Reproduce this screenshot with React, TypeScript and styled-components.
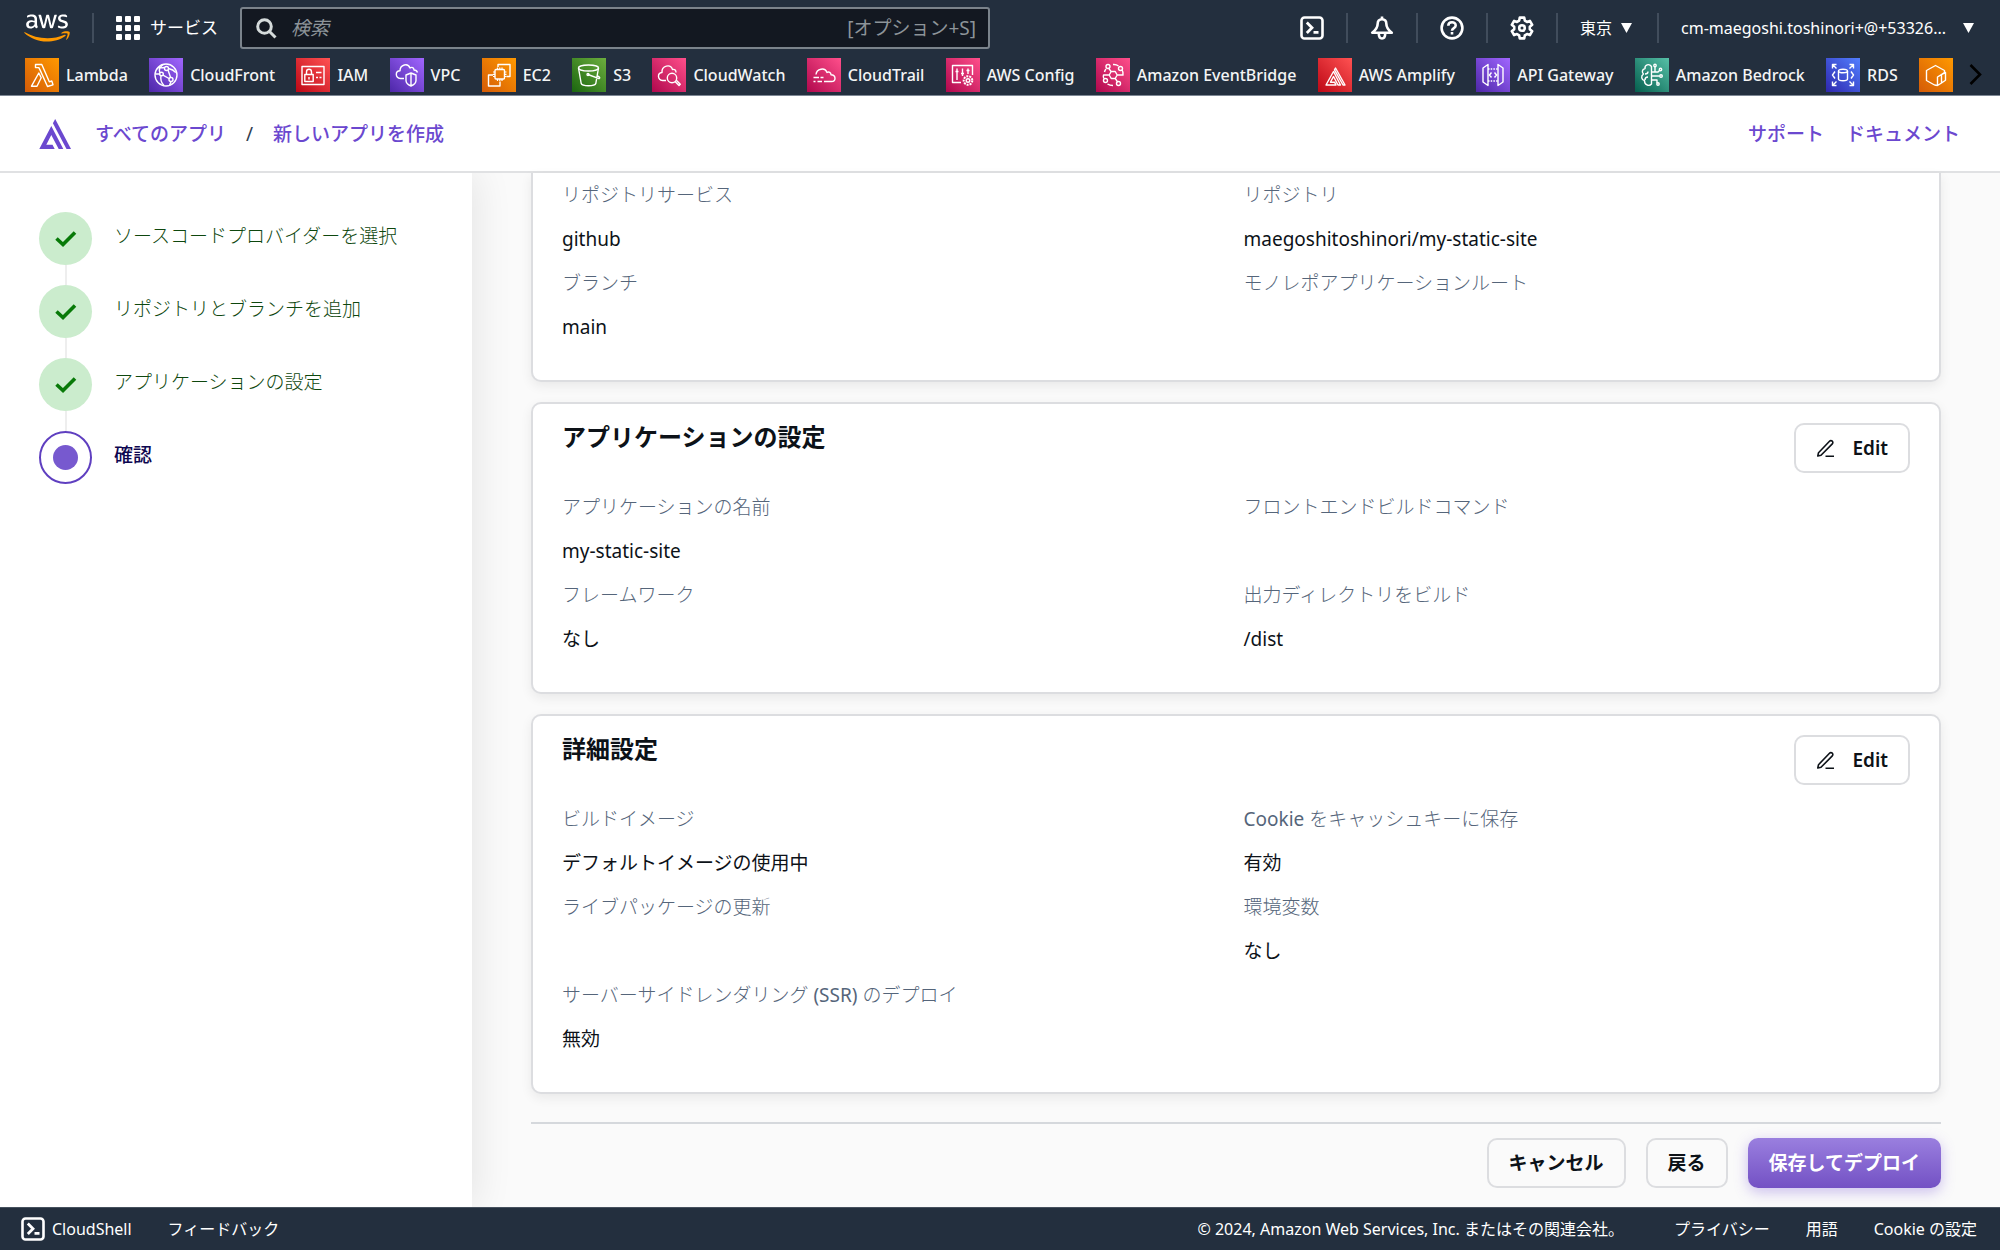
import React from "react";
import styled, { createGlobalStyle, css } from "styled-components";

const fontStack = '"Noto Sans", "Noto Sans CJK JP", sans-serif';
const navy = "#232f3e";
const purple = "#6b48cf";

const GlobalStyle = createGlobalStyle`
  *, *::before, *::after { box-sizing: border-box; }
  body { margin: 0; background: #fafafa; color: #0d1218; font-family: ${fontStack}; }
  button, input { font-family: inherit; }
  a { color: inherit; text-decoration: none; }
  h2, p, ol, ul, dl, dt, dd { margin: 0; padding: 0; }
  ol, ul { list-style: none; }
  svg { display: block; flex: none; }
`;

const Page = styled.div`
  display: flex;
  flex-direction: column;
  min-height: 100vh;
`;

/* ---------- console header ---------- */

const ConsoleHeader = styled.header`
  background: ${navy};
  color: #fff;
  border-bottom: 1px solid #7d8794;
`;

const TopBar = styled.div`
  display: flex;
  align-items: center;
  height: 56px;
  padding: 0 26px 0 24px;
`;

const Divider = styled.span`
  width: 2px;
  height: 30px;
  background: #414d5c;
`;

const ServicesButton = styled.button`
  display: flex;
  align-items: center;
  gap: 10px;
  margin: 0 22px;
  padding: 0;
  border: 0;
  background: none;
  color: #fff;
  font-size: 17px;
  line-height: 24px;
  white-space: nowrap;
`;

const LogoLink = styled.a`
  margin-right: 22px;
`;

const SearchBox = styled.label`
  display: flex;
  align-items: center;
  flex: 0 1 750px;
  height: 42px;
  padding: 0 12px 0 14px;
  gap: 14px;
  border: 2px solid #7b838b;
  border-radius: 3px;
  background: #131821;
  color: #8d9499;
`;

const SearchInput = styled.input`
  flex: 1;
  min-width: 0;
  padding: 0;
  border: 0;
  outline: 0;
  background: none;
  color: #fff;
  font-size: 19px;
  line-height: 28px;
  &::placeholder { color: #8d9499; font-style: italic; opacity: 1; }
`;

const Shortcut = styled.span`
  font-size: 19px;
  line-height: 28px;
`;

const TopActions = styled.nav`
  display: flex;
  align-items: center;
  gap: 22px;
  margin-left: auto;
`;

const IconButton = styled.button`
  padding: 0;
  border: 0;
  background: none;
  color: #fff;
`;

const MenuButton = styled.button`
  display: flex;
  align-items: center;
  justify-content: space-between;
  gap: 9px;
  padding: 0;
  border: 0;
  background: none;
  color: #fff;
  font-size: 16px;
  line-height: 24px;
  white-space: nowrap;
`;

const RegionButton = styled(MenuButton)`
  margin-right: 3px;
`;

const AccountButton = styled(MenuButton)`
  min-width: 293px;
`;

const FavoritesBar = styled.nav`
  display: flex;
  align-items: center;
  height: 39px;
  padding: 0 18px 2px 25px;
  gap: 16px;
`;

const FavoriteList = styled.ul`
  display: flex;
  flex: 1;
  justify-content: space-between;
`;

const Favorite = styled.a`
  display: flex;
  align-items: center;
  gap: 7px;
  font-size: 16px;
  line-height: 24px;
  font-weight: 500;
  color: #f4f5f5;
  white-space: nowrap;
`;

/* ---------- app header ---------- */

const AppHeader = styled.header`
  display: flex;
  align-items: center;
  justify-content: space-between;
  height: 77px;
  padding: 0 40px 0 38px;
  background: #fff;
  border-bottom: 2px solid #e0e1e3;
`;

const Breadcrumb = styled.nav`
  display: flex;
  align-items: center;
  font-size: 19px;
  line-height: 28px;
`;

const HeaderLink = styled.a`
  color: ${purple};
  font-weight: 500;
`;

const BrandLink = styled.a`
  margin-right: 23px;
`;

const Slash = styled.span`
  margin: 0 20px;
  color: #304050;
`;

const HelpLinks = styled.nav`
  display: flex;
  gap: 22px;
  font-size: 19px;
  line-height: 28px;
`;

/* ---------- body ---------- */

const Body = styled.div`
  display: flex;
  flex: 1;
`;

const Sidebar = styled.aside`
  flex: 0 0 472px;
  padding: 39px;
  background: #fff;
  box-shadow: 4px 0 36px rgba(0, 0, 0, 0.09);
  clip-path: inset(0 -60px 0 0);
`;

const StepItem = styled.li`
  display: flex;
  gap: 22px;
`;

const StepTrack = styled.span`
  display: flex;
  flex-direction: column;
  align-items: center;
`;

const StepConnector = styled.span`
  width: 2px;
  height: 20px;
  background: #eeeeee;
`;

const StepMark = styled.span<{ $active?: boolean }>`
  display: grid;
  place-items: center;
  width: 53px;
  height: 53px;
  border-radius: 50%;
  ${(p) =>
    p.$active
      ? css`
          border: 2px solid #5f3fc0;
          background: #fff;
        `
      : css`
          background: #cbeccd;
          color: #087a08;
        `}
`;

const StepDot = styled.span`
  width: 25px;
  height: 25px;
  border-radius: 50%;
  background: #7759cf;
`;

const StepLabel = styled.span<{ $active?: boolean }>`
  font-size: 19px;
  line-height: 48px;
  color: ${(p) => (p.$active ? "#0d0650" : "#0e470e")};
  font-weight: ${(p) => (p.$active ? 500 : 300)};
`;

const Content = styled.main`
  display: flex;
  flex-direction: column;
  flex: 1;
  min-width: 0;
  gap: 20px;
  padding: 0 59px 17px;
`;

const Card = styled.section<{ $scrolled?: boolean }>`
  padding: 19px 29px 31px;
  border: 2px solid #dcdde0;
  border-radius: 10px;
  background: #fff;
  box-shadow: 0 4px 12px rgba(0, 0, 0, 0.07);
  ${(p) =>
    p.$scrolled &&
    css`
      padding-top: 0;
      border-top: 0;
      border-radius: 0 0 10px 10px;
    `}
`;

const CardHeader = styled.div`
  display: flex;
  align-items: flex-start;
  justify-content: space-between;
  margin-bottom: 12px;
`;

const CardTitle = styled.h2`
  font-size: 24px;
  line-height: 28px;
  font-weight: 600;
`;

const Fields = styled.dl`
  display: grid;
  grid-template-columns: 1fr 1fr;
  column-gap: 15px;
`;

const Label = styled.dt`
  height: 44px;
  font-size: 19px;
  line-height: 44px;
  font-weight: 300;
  color: #55657a;
`;

const Latin = styled.span`
  font-weight: 400;
`;

const Value = styled.dd`
  height: 44px;
  font-size: 19px;
  line-height: 44px;
`;

const Button = styled.button<{ $primary?: boolean }>`
  display: flex;
  align-items: center;
  gap: 17px;
  height: 50px;
  padding: 0 20px;
  border: 2px solid #dcdde0;
  border-radius: 10px;
  background: transparent;
  color: #0d1218;
  font-size: 19px;
  line-height: 28px;
  font-weight: 600;
  ${(p) =>
    p.$primary &&
    css`
      padding: 0 21px;
      border: 0;
      background: linear-gradient(#9a7fdf, #7351c4);
      color: #fff;
      box-shadow: 0 4px 14px rgba(115, 81, 215, 0.35);
    `}
`;

const Actions = styled.div`
  display: flex;
  justify-content: flex-end;
  gap: 20px;
  margin-top: 8px;
  padding-top: 14px;
  border-top: 2px solid #d5d8dc;
`;

/* ---------- footer ---------- */

const Footer = styled.footer`
  display: flex;
  align-items: center;
  height: 43px;
  padding: 0 23px 0 21px;
  gap: 36px;
  border-top: 1px solid #46515e;
  background: ${navy};
  color: #fff;
  font-size: 16px;
  line-height: 24px;
  white-space: nowrap;
`;

const ShellLink = styled.a`
  display: flex;
  align-items: center;
  gap: 7px;
`;

const Copyright = styled.span`
  margin-left: auto;
  margin-right: 14px;
`;

/* ---------- icons ---------- */

const AwsLogo = () => (
  <svg width="46" height="30" viewBox="0 0 304 182" aria-label="AWS">
    <path fill="#fff" d="M86.4 66.4c0 3.7.4 6.7 1.1 8.9.8 2.2 1.8 4.6 3.2 7.2.5.8.7 1.6.7 2.3 0 1-.6 2-1.9 3l-6.3 4.2c-.9.6-1.8.9-2.6.9-1 0-2-.5-3-1.4-1.4-1.5-2.6-3.1-3.6-4.7-1-1.7-2-3.6-3.1-5.9-7.8 9.2-17.6 13.8-29.4 13.8-8.4 0-15.1-2.4-20-7.2s-7.4-11.2-7.4-19.2c0-8.5 3-15.4 9.1-20.6s14.2-7.8 24.5-7.8c3.4 0 6.9.3 10.6.8s7.5 1.3 11.5 2.2v-7.3c0-7.6-1.6-12.9-4.7-16-3.2-3.1-8.6-4.6-16.3-4.6-3.5 0-7.1.4-10.8 1.3s-7.3 2-10.8 3.4c-1.6.7-2.8 1.1-3.5 1.3s-1.2.3-1.6.3c-1.4 0-2.1-1-2.1-3.1v-4.9c0-1.6.2-2.8.7-3.5s1.4-1.4 2.8-2.1c3.5-1.8 7.7-3.3 12.6-4.5C41 1.900 46.200 1.300 51.700 1.300c11.900 0 20.600 2.700 26.200 8.100 5.500 5.400 8.300 13.600 8.300 24.600v32.400zM45.800 81.600c3.300 0 6.700-.6 10.300-1.800s6.800-3.400 9.500-6.400c1.600-1.900 2.800-4 3.400-6.400s1-5.300 1-8.700v-4.200c-2.900-.7-6-1.300-9.200-1.700s-6.300-.6-9.400-.6c-6.700 0-11.600 1.300-14.900 4s-4.900 6.500-4.900 11.500c0 4.700 1.200 8.200 3.700 10.600 2.400 2.500 5.900 3.700 10.500 3.700zm80.300 10.800c-1.800 0-3-.3-3.800-1-.8-.6-1.500-2-2.100-3.900L96.700 10.200c-.6-2-.9-3.300-.9-4 0-1.600.8-2.500 2.400-2.500h9.800c1.900 0 3.200.3 3.900 1 .8.600 1.400 2 2 3.900l16.800 66.200 15.600-66.200c.5-2 1.100-3.300 1.900-3.900s2.200-1 4-1h8c1.900 0 3.200.3 4 1 .8.600 1.500 2 1.900 3.900l15.800 67 17.300-67c.6-2 1.300-3.300 2-3.900.8-.6 2.100-1 3.900-1h9.300c1.600 0 2.500.8 2.500 2.500 0 .5-.1 1-.2 1.600s-.3 1.400-.7 2.500l-24.100 77.300c-.6 2-1.300 3.300-2.100 3.900s-2.100 1-3.800 1h-8.600c-1.900 0-3.200-.3-4-1s-1.500-2-1.900-4L156 23l-15.400 64.400c-.5 2-1.100 3.300-1.900 4s-2.200 1-4 1zm128.500 2.700c-5.200 0-10.400-.6-15.400-1.800s-8.900-2.500-11.500-4c-1.600-.9-2.700-1.900-3.100-2.800s-.6-1.900-.6-2.800v-5.100c0-2.100.8-3.100 2.300-3.100.6 0 1.200.1 1.800.3s1.500.6 2.500 1c3.400 1.500 7.100 2.700 11 3.500 4 .8 7.900 1.200 11.900 1.200 6.300 0 11.200-1.100 14.600-3.300s5.200-5.400 5.200-9.500c0-2.800-.9-5.100-2.700-7s-5.200-3.600-10.100-5.200L246 52c-7.300-2.300-12.700-5.700-16-10.200-3.300-4.400-5-9.300-5-14.500 0-4.200.9-7.900 2.700-11.100s4.200-6 7.200-8.200c3-2.300 6.400-4 10.400-5.200s8.200-1.700 12.600-1.700c2.200 0 4.500.1 6.700.4 2.300.3 4.400.7 6.500 1.100 2 .5 3.900 1 5.700 1.600s3.200 1.200 4.200 1.800c1.400.8 2.400 1.600 3 2.500.6.800.9 1.900.9 3.300v4.700c0 2.100-.8 3.200-2.300 3.200-.8 0-2.100-.4-3.800-1.200-5.700-2.600-12.100-3.900-19.200-3.900-5.700 0-10.200.9-13.300 2.800s-4.700 4.800-4.700 8.900c0 2.800 1 5.200 3 7.100s5.700 3.800 11 5.500l14.200 4.500c7.200 2.300 12.400 5.500 15.500 9.600s4.600 8.800 4.600 14c0 4.300-.9 8.200-2.600 11.600-1.800 3.400-4.200 6.400-7.300 8.800-3.100 2.500-6.800 4.300-11.100 5.600-4.500 1.400-9.200 2.100-14.300 2.100z" />
    <path fill="#ff9900" d="M273.500 143.700c-32.900 24.300-80.700 37.200-121.800 37.200-57.600 0-109.500-21.300-148.700-56.700-3.100-2.800-.3-6.600 3.400-4.400 42.400 24.600 94.700 39.500 148.800 39.500 36.500 0 76.600-7.600 113.500-23.200 5.500-2.500 10.200 3.600 4.800 7.600z" />
    <path fill="#ff9900" d="M287.200 128.100c-4.200-5.400-27.800-2.600-38.500-1.300-3.200.4-3.700-2.400-.8-4.500 18.800-13.200 49.700-9.400 53.300-5 3.600 4.500-1 35.400-18.600 50.200-2.700 2.300-5.300 1.100-4.100-1.900 4-9.900 12.900-32.200 8.700-37.500z" />
  </svg>
);

const GridIcon = () => (
  <svg width="24" height="24" viewBox="0 0 24 24" fill="#fff">
    {[0, 9, 18].map((y) => [0, 9, 18].map((x) => <rect key={`${x}-${y}`} x={x} y={y} width="6" height="6" rx="1" />))}
  </svg>
);

const SearchIcon = () => (
  <svg width="21" height="21" viewBox="0 0 21 21" fill="none" stroke="#d5dbdb" strokeWidth="3">
    <circle cx="8.500" cy="8.500" r="6.800" />
    <path d="M13.500 13.500 19.500 19.500" />
  </svg>
);

const ShellIcon = () => (
  <svg width="24" height="24" viewBox="0 0 24 24" fill="none" stroke="#fff" strokeWidth="2.600">
    <rect x="1.500" y="1.500" width="21" height="21" rx="3" />
    <path d="M6.800 6.500 12 11.700l-5.200 5.200M13.500 16.300h5" strokeWidth="2.800" />
  </svg>
);

const BellIcon = () => (
  <svg width="24" height="24" viewBox="0 0 24 24" fill="none" stroke="#fff" strokeWidth="2.600" strokeLinejoin="round">
    <path d="M12 3.200c-2.800 0-4.300 1.900-4.300 4.300 0 4-1.700 6.300-5.500 9.300h19.600c-3.800-3-5.500-5.300-5.500-9.300 0-2.400-1.500-4.300-4.300-4.300z" />
    <path d="M12 3.200V.500M8.800 17.500c0 6.600 6.400 6.600 6.400 0" />
  </svg>
);

const HelpIcon = () => (
  <svg width="24" height="24" viewBox="0 0 24 24" fill="none" stroke="#fff" strokeWidth="2.600">
    <circle cx="12" cy="12" r="10.400" />
    <path d="M8.300 9.800c0-4.600 7.400-4.600 7.400-.3 0 2.700-3.700 2.500-3.700 5.200M12 16v2.600" />
  </svg>
);

const GearIcon = () => (
  <svg width="24" height="24" viewBox="0 0 24 24" fill="none" stroke="#fff" strokeWidth="2.600" strokeLinejoin="round">
    <path d="M9.800 1.600h4.400l.6 3 2.200 1.300 2.900-1 2.300 3.900-2.400 2v2.400l2.400 2-2.300 3.900-2.900-1-2.200 1.300-.6 3H9.800l-.6-3L7 18.100l-2.900 1-2.300-3.900 2.400-2v-2.400l-2.400-2 2.300-3.900 2.900 1 2.200-1.300z" />
    <circle cx="12" cy="12" r="2.800" />
  </svg>
);

const Caret = () => (
  <svg width="11" height="10" viewBox="0 0 11 10" fill="#fff">
    <path d="M0 0h11L5.500 10z" />
  </svg>
);

const ChevronRight = () => (
  <svg width="13" height="21" viewBox="0 0 13 21" fill="none" stroke="#000" strokeWidth="2.600">
    <path d="M1.500 1 11 10.500 1.500 20" />
  </svg>
);

const AmplifyMark = () => (
  <svg width="34" height="30" viewBox="0 0 34 30" fill={purple}>
    <path d="M13.300 7 1.300 30h15.400l-2.200-4.200H8.300l5-9.700L20.700 30h4.600z" />
    <path d="M14.900 4.300 17.200 0 33 30h-4.500z" />
  </svg>
);

const CheckIcon = () => (
  <svg width="22" height="18" viewBox="0 0 22 18" fill="none" stroke="currentColor" strokeWidth="3.600">
    <path d="M1.500 8.500 8 14.500 20 2.500" />
  </svg>
);

const PencilIcon = () => (
  <svg width="19" height="19" viewBox="0 0 19 19" fill="none" stroke="#0d1218" strokeWidth="1.600" strokeLinejoin="round">
    <path d="M13.500 2.200a1.900 1.900 0 0 1 2.800 2.700L5 16.300l-3.200.7.700-3.300zM9.500 17.300H18" />
  </svg>
);

const gradients: Record<string, [string, string]> = {
  orange: ["#d45b07", "#f90"],
  purple: ["#4d27a8", "#a166ff"],
  red: ["#bd0816", "#ff5252"],
  green: ["#1b660f", "#6cae3e"],
  pink: ["#b0084d", "#ff4f8b"],
  teal: ["#055f4e", "#56c0a7"],
  blue: ["#2e27ad", "#527fff"],
};

const Tile = ({ tone, children }: { tone: string; children: React.ReactNode }) => (
  <svg width="34" height="34" viewBox="0 0 34 34" fill="none" stroke="#fff" strokeWidth="1.400" strokeLinejoin="round">
    <defs>
      <linearGradient id={`tile-${tone}`} x1="0" y1="1" x2="1" y2="0">
        <stop offset="0" stopColor={gradients[tone][0]} />
        <stop offset="1" stopColor={gradients[tone][1]} />
      </linearGradient>
    </defs>
    <rect width="34" height="34" fill={`url(#tile-${tone})`} stroke="none" />
    {children}
  </svg>
);

const favorites: { name: string; tone: string; glyph: React.ReactNode }[] = [
  {
    name: "Lambda",
    tone: "orange",
    glyph: <path d="M10.500 6.500h6.300l7.500 17.300 2.500-.8 1.200 3.800-5.500 1.700-7.500-16.600-1.200-2.300h-3.300zM13.800 15l2.400 4.800-4.200 8.400H6.500z" />,
  },
  {
    name: "CloudFront",
    tone: "purple",
    glyph: (
      <>
        <circle cx="17" cy="17" r="11" />
        <circle cx="17.500" cy="10.500" r="2" />
        <circle cx="12.500" cy="16" r="1.800" />
        <circle cx="22" cy="21.500" r="2" />
        <path d="M14 6.500c-3 2.500-4.500 5.500-3 8.300M11 16H6.500M14 17.200l6 3.300M19 12l2.500 7.300M12 17.800c-.8 3.500.5 7 3 9.700M19.500 10.500c3 .6 5.500 1.900 7.300 4M22 23.500l-1.500 4M9 9.500c2 .5 4 .5 6.500 0" />
      </>
    ),
  },
  {
    name: "IAM",
    tone: "red",
    glyph: (
      <>
        <rect x="6" y="8.500" width="22" height="18" />
        <path d="M8.800 16.500h8.400v7H8.800zM10.500 16.500V14c0-3.600 5-3.600 5 0v2.500M13 19v2.500M20 14.500h5.500M20 19.500h2M23.500 19.500h2" />
      </>
    ),
  },
  {
    name: "VPC",
    tone: "purple",
    glyph: (
      <>
        <path d="M14 20.500h-3.500c-5.500-.5-5.500-7.500-.5-7.700C10 6.500 18 4.500 20 10c2-1.500 4 0 4 2 2 .1 3 1 3.500 2.500" />
        <path d="M16 17l5-2 5 2v5.500c0 3-2.500 4.500-5 5.500-2.500-1-5-2.500-5-5.500zM21 15v13" />
      </>
    ),
  },
  {
    name: "EC2",
    tone: "orange",
    glyph: (
      <>
        <path d="M18 23.500V28H6.500V17H11M16 9V6.500h12v12h-3.500" />
        <rect x="13" y="11.500" width="9.500" height="9.500" rx="1" />
        <path d="M15.500 11.500V9.500M17.800 11.500V9.500M20 11.500V9.500M15.500 23V21M17.800 23V21M20 23V21M13 14h-2M13 16.300h-2M13 18.500h-2M24.500 14h-2M24.500 16.300h-2M24.500 18.500h-2" strokeWidth="1.200" />
      </>
    ),
  },
  {
    name: "S3",
    tone: "green",
    glyph: (
      <>
        <ellipse cx="16.500" cy="10" rx="10" ry="3" />
        <path d="M6.500 10l2.700 15.500c1 3 13.600 3 14.600 0L26.500 10M16 16.500l11 4.200c1.500-.8.500-2-1.500-2.700" />
        <circle cx="16" cy="16.500" r="1" />
      </>
    ),
  },
  {
    name: "CloudWatch",
    tone: "pink",
    glyph: (
      <>
        <path d="M14 22.500h-3.500c-5-.5-5.500-7.500-.5-8C9.500 7.500 18.500 5.500 20.500 11.500c2.500-.5 3.500 1 3.500 3" />
        <circle cx="20" cy="20" r="4.700" />
        <path d="M23 23.500l4 4 1.300-1.300-4-4" />
      </>
    ),
  },
  {
    name: "CloudTrail",
    tone: "pink",
    glyph: (
      <path d="M9 16.500c.5-6 9-7.500 11-2 2-1.200 4 .2 4 2.200 5.500.3 5 6.800.5 6.800H17M6.500 19.500H12M13.500 19.500h3M6.500 23.500h2M10.500 23.500H15" />
    ),
  },
  {
    name: "AWS Config",
    tone: "pink",
    glyph: (
      <>
        <path d="M15 24.500H6.500v-17h20V17M11 10.500V22M16.500 10.500V18M22 10.500V16M9.500 13.500h3M15 15.500h3M20.500 12.500h3" />
        <circle cx="22" cy="22.500" r="4.300" strokeWidth="2" strokeDasharray="2 1" />
        <circle cx="22" cy="22.500" r="1.800" />
      </>
    ),
  },
  {
    name: "Amazon EventBridge",
    tone: "pink",
    glyph: (
      <>
        <path d="M15.200 13.500h4l2 3.500-2 3.500h-4l-2-3.500zM15 13.500l-2.500-3.700M19.300 20.500l2.400 3.700M21 17h6c.5-2.500-.2-4-1-5.200M13 17H7.500c-.5 1.500 0 2.500.3 3.500M17 6.500c2-.2 4 .3 5.500 1.500M17 27.500c-2.500 0-4-.5-5.500-1.500M8.500 14c.3-1.500.8-2.200 1.500-3" />
        <circle cx="12" cy="8.500" r="2" />
        <circle cx="24.500" cy="10.500" r="2" />
        <circle cx="9.500" cy="22.500" r="2" />
        <circle cx="22.500" cy="25.500" r="2" />
      </>
    ),
  },
  {
    name: "AWS Amplify",
    tone: "red",
    glyph: <path d="M15.500 13.500 8 27h10l-1.500-2.800h-4l3-5.700L20 27h2.500zM17.500 10l-1 1.800L25 27h2z" />,
  },
  {
    name: "API Gateway",
    tone: "purple",
    glyph: (
      <>
        <path d="M7 10l5-3.500v21L7 24zM27 10l-5-3.500v21l5-3.500zM15.500 14.500 13.500 17l2 2.500M18.500 14.500l2 2.500-2 2.500" />
        <path d="M12 11h10M12 23h10" strokeDasharray="1.500 1.200" />
      </>
    ),
  },
  {
    name: "Amazon Bedrock",
    tone: "teal",
    glyph: (
      <>
        <path d="M16.500 8.500c-2.500-3.500-7-1.500-6.500 2-3.500 1-3 4-1.500 5.500C5.500 18 6.500 22 9.500 22.500c-.3 4 4.500 6.500 7 3.500zM16.500 14H23l2-2M16.500 18h8M16.500 22H22v3M20 14V8.500M10 16c1.500 0 3-.5 3-2.500M10 22c0-1.500 1-3 3-3" />
        <circle cx="20" cy="7.500" r="1.200" />
        <circle cx="25.500" cy="11.500" r="1.200" />
        <circle cx="26" cy="18" r="1.300" />
        <circle cx="23" cy="26" r="1.200" />
      </>
    ),
  },
  {
    name: "RDS",
    tone: "blue",
    glyph: (
      <>
        <ellipse cx="17" cy="13" rx="4.500" ry="1.800" />
        <path d="M12.500 13v8c0 2.300 9 2.300 9 0v-8M9 13.500 6.500 17 9 20.500M25 13.500l2.500 3.500-2.500 3.500" />
        <path d="M6.500 10.500v-4h4M6.500 6.500l4 4M23.500 6.500h4v4M27.500 6.500l-4 4M6.500 23.500v4h4M6.500 27.500l4-4M23.500 27.500h4v-4M27.500 27.500l-4-4" />
      </>
    ),
  },
  {
    name: "",
    tone: "orange",
    glyph: (
      <path d="M15.500 27 7.500 22.500v-10L16.500 7.500l9 5v2l-7 4.500v8.500l4-2.500v-4M7.500 12.500v10M22.500 17v8l4-2.800V14.500l-8 4.500M18.500 27.500l-3-.5" />
    ),
  },
];

/* ---------- content ---------- */

const steps = [
  { label: "ソースコードプロバイダーを選択" },
  { label: "リポジトリとブランチを追加" },
  { label: "アプリケーションの設定" },
  { label: "確認", active: true },
];

type FieldData = [label: string, value: string];

/* Latin words in a light Japanese label keep the regular weight. */
const LabelText = ({ text }: { text: string }) => (
  <>{text.split(/([A-Za-z()]+)/).map((part, i) => (i % 2 ? <Latin key={i}>{part}</Latin> : part))}</>
);

const FieldGrid = ({ items }: { items: FieldData[] }) => (
  <Fields>
    {items.map(([label, value]) => (
      <div key={label}>
        <Label><LabelText text={label} /></Label>
        <Value>{value}</Value>
      </div>
    ))}
  </Fields>
);

const ReviewCard = ({ title, items }: { title: string; items: FieldData[] }) => (
  <Card>
    <CardHeader>
      <CardTitle>{title}</CardTitle>
      <Button type="button">
        <PencilIcon />
        Edit
      </Button>
    </CardHeader>
    <FieldGrid items={items} />
  </Card>
);

export default function App() {
  return (
    <Page lang="ja">
      <GlobalStyle />
      <ConsoleHeader>
        <TopBar>
          <LogoLink href="#" aria-label="AWS">
            <AwsLogo />
          </LogoLink>
          <Divider />
          <ServicesButton type="button">
            <GridIcon />
            サービス
          </ServicesButton>
          <SearchBox>
            <SearchIcon />
            <SearchInput type="text" placeholder="検索" aria-label="検索" />
            <Shortcut>[オプション+S]</Shortcut>
          </SearchBox>
          <TopActions>
            <IconButton type="button" aria-label="CloudShell"><ShellIcon /></IconButton>
            <Divider />
            <IconButton type="button" aria-label="通知"><BellIcon /></IconButton>
            <Divider />
            <IconButton type="button" aria-label="ヘルプ"><HelpIcon /></IconButton>
            <Divider />
            <IconButton type="button" aria-label="設定"><GearIcon /></IconButton>
            <Divider />
            <RegionButton type="button">東京<Caret /></RegionButton>
            <Divider />
            <AccountButton type="button">cm-maegoshi.toshinori+@+53326...<Caret /></AccountButton>
          </TopActions>
        </TopBar>
        <FavoritesBar>
          <FavoriteList>
            {favorites.map((f) => (
              <li key={f.name}>
                <Favorite href="#" aria-label={f.name || "ECR"}>
                  <Tile tone={f.tone}>{f.glyph}</Tile>
                  {f.name}
                </Favorite>
              </li>
            ))}
          </FavoriteList>
          <IconButton type="button" aria-label="次へ"><ChevronRight /></IconButton>
        </FavoritesBar>
      </ConsoleHeader>

      <AppHeader>
        <Breadcrumb>
          <BrandLink href="#" aria-label="Amplify"><AmplifyMark /></BrandLink>
          <HeaderLink href="#">すべてのアプリ</HeaderLink>
          <Slash>/</Slash>
          <HeaderLink href="#">新しいアプリを作成</HeaderLink>
        </Breadcrumb>
        <HelpLinks>
          <HeaderLink href="#">サポート</HeaderLink>
          <HeaderLink href="#">ドキュメント</HeaderLink>
        </HelpLinks>
      </AppHeader>

      <Body>
        <Sidebar>
          <ol>
            {steps.map((step, i) => (
              <StepItem key={step.label}>
                <StepTrack>
                  <StepMark $active={step.active}>{step.active ? <StepDot /> : <CheckIcon />}</StepMark>
                  {i < steps.length - 1 && <StepConnector />}
                </StepTrack>
                <StepLabel $active={step.active}>{step.label}</StepLabel>
              </StepItem>
            ))}
          </ol>
        </Sidebar>
        <Content>
          <Card $scrolled>
            <FieldGrid
              items={[
                ["リポジトリサービス", "github"],
                ["リポジトリ", "maegoshitoshinori/my-static-site"],
                ["ブランチ", "main"],
                ["モノレポアプリケーションルート", ""],
              ]}
            />
          </Card>
          <ReviewCard
            title="アプリケーションの設定"
            items={[
              ["アプリケーションの名前", "my-static-site"],
              ["フロントエンドビルドコマンド", ""],
              ["フレームワーク", "なし"],
              ["出力ディレクトリをビルド", "/dist"],
            ]}
          />
          <ReviewCard
            title="詳細設定"
            items={[
              ["ビルドイメージ", "デフォルトイメージの使用中"],
              ["Cookie をキャッシュキーに保存", "有効"],
              ["ライブパッケージの更新", ""],
              ["環境変数", "なし"],
              ["サーバーサイドレンダリング (SSR) のデプロイ", "無効"],
            ]}
          />
          <Actions>
            <Button type="button">キャンセル</Button>
            <Button type="button">戻る</Button>
            <Button type="button" $primary>保存してデプロイ</Button>
          </Actions>
        </Content>
      </Body>

      <Footer>
        <ShellLink href="#"><ShellIcon />CloudShell</ShellLink>
        <a href="#">フィードバック</a>
        <Copyright>© 2024, Amazon Web Services, Inc. またはその関連会社。</Copyright>
        <a href="#">プライバシー</a>
        <a href="#">用語</a>
        <a href="#">Cookie の設定</a>
      </Footer>
    </Page>
  );
}
